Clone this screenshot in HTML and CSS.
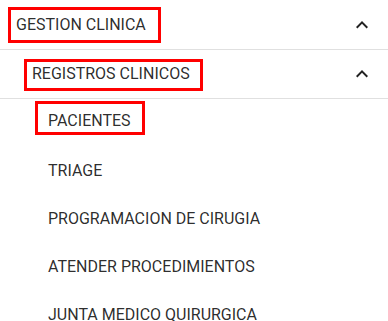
FILE: index.html
```html
<!DOCTYPE html>
<html lang="es">
<head>
<meta charset="utf-8">
<title>Menú</title>
<link rel="stylesheet" href="styles.css">
</head>
<body>
<nav class="menu">
  <div class="row lvl1">
    <span class="mark mark1">GESTION CLINICA</span>
    <svg class="chev" viewBox="0 0 24 24" width="24" height="24"><path d="M12 8l-6 6 1.41 1.41L12 10.83l4.59 4.58L18 14z"/></svg>
  </div>
  <div class="row lvl2">
    <span class="mark mark2">REGISTROS CLINICOS</span>
    <svg class="chev" viewBox="0 0 24 24" width="24" height="24"><path d="M12 8l-6 6 1.41 1.41L12 10.83l4.59 4.58L18 14z"/></svg>
  </div>
  <ul class="items">
    <li class="item item-marked"><span class="mark mark3">PACIENTES</span></li>
    <li class="item">TRIAGE</li>
    <li class="item">PROGRAMACION DE CIRUGIA</li>
    <li class="item">ATENDER PROCEDIMIENTOS</li>
    <li class="item">JUNTA MEDICO QUIRURGICA</li>
  </ul>
</nav>
</body>
</html>
```

FILE: styles.css
```css
html, body {
  margin: 0;
  padding: 0;
  background: #fff;
}
body {
  font-family: Roboto, "Liberation Sans", sans-serif;
  font-size: 16px;
  color: rgba(0, 0, 0, 0.84);
  width: 388px;
  height: 321px;
  overflow: hidden;
}
.menu {
  display: flex;
  flex-direction: column;
}
.row {
  display: flex;
  align-items: center;
  border-bottom: 1px solid #e0e0e0;
  padding-right: 14px;
}
.lvl1 {
  height: 49px;
  padding-left: 8px;
}
.lvl2 {
  height: 48px;
  padding-left: 24px;
}
.chev {
  margin-left: auto;
  fill: rgba(0, 0, 0, 0.87);
  flex: none;
}
.lvl1 .chev { margin-top: 1px; }
.mark {
  display: inline-block;
  border: 3px solid #f00;
  white-space: nowrap;
}
.mark1 {
  padding: 0 12px 0 5px;
  line-height: 30px;
}
.mark2 {
  padding: 0 10px 2px 5px;
  line-height: 24px;
  margin-top: 2px;
}
.mark3 {
  padding: 5px 11px 0 10px;
  line-height: 23px;
}
.items {
  list-style: none;
  margin: 0;
  padding: 0;
}
.item {
  height: 48px;
  line-height: 48px;
  padding-left: 48px;
  white-space: nowrap;
}
.item-marked {
  display: flex;
  align-items: flex-start;
  padding-left: 35px;
  padding-top: 2px;
  height: 46px;
  line-height: normal;
}
```
